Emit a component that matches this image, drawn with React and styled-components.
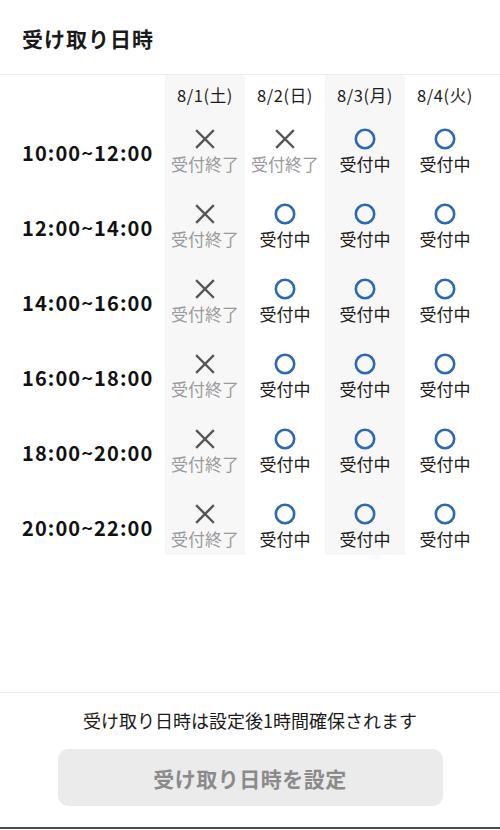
import React from "react";
import styled, { createGlobalStyle } from "styled-components";

const days = [
    { label: "8/1(土)", shaded: true, open: [false, false, false, false, false, false] },
    { label: "8/2(日)", shaded: false, open: [false, true, true, true, true, true] },
    { label: "8/3(月)", shaded: true, open: [true, true, true, true, true, true] },
    { label: "8/4(火)", shaded: false, open: [true, true, true, true, true, true] },
];

const times = ["10:00~12:00", "12:00~14:00", "14:00~16:00", "16:00~18:00", "18:00~20:00", "20:00~22:00"];

function CrossIcon() {
    return (
        <svg width="22" height="22" viewBox="0 0 22 22">
            <path d="M3 3 L19 19 M19 3 L3 19" stroke="#555" strokeWidth="2.4" strokeLinecap="square" fill="none" />
        </svg>
    );
}

function CircleIcon() {
    return (
        <svg width="22" height="22" viewBox="0 0 22 22">
            <circle cx="11" cy="11" r="9.2" stroke="#2d68b2" strokeWidth="2.6" fill="none" />
        </svg>
    );
}

function App() {
    return (
        <>
            <GlobalStyle />
            <Page>
                <Header>
                    <Title>受け取り日時</Title>
                </Header>
                <Table>
                    <LabelColumn>
                        <HeadCell />
                        {times.map((t) => (
                            <TimeCell key={t}>{t}</TimeCell>
                        ))}
                    </LabelColumn>
                    {days.map((day) => (
                        <DayColumn key={day.label} shaded={day.shaded}>
                            <HeadCell>{day.label}</HeadCell>
                            {day.open.map((open, i) => (
                                <SlotCell key={i}>
                                    {open ? <CircleIcon /> : <CrossIcon />}
                                    <SlotText closed={!open}>{open ? "受付中" : "受付終了"}</SlotText>
                                </SlotCell>
                            ))}
                        </DayColumn>
                    ))}
                </Table>
                <Footer>
                    <Note>受け取り日時は設定後1時間確保されます</Note>
                    <SubmitButton disabled>受け取り日時を設定</SubmitButton>
                </Footer>
            </Page>
        </>
    );
}

export default App;

const GlobalStyle = createGlobalStyle`
    body {
        margin: 0;
        background: #fff;
        font-family: "Noto Sans CJK JP", "Noto Sans", sans-serif;
        color: #1a1a1a;
    }
`;

const Page = styled.div`
    width: 500px;
    height: 830px;
    display: flex;
    flex-direction: column;
    box-sizing: border-box;
    padding-bottom: 1px;
`;

const Header = styled.div`
    height: 74px;
    display: flex;
    align-items: center;
    padding: 0 22px;
    border-bottom: 1px solid #ececec;
`;

const Title = styled.h1`
    margin: 0;
    font-size: 21px;
    font-weight: 700;
    letter-spacing: 1px;
    line-height: 1;
    padding-top: 3px;
`;

const Table = styled.div`
    display: flex;
`;

const Column = styled.div`
    display: flex;
    flex-direction: column;
    gap: 10px;
`;

const LabelColumn = styled(Column)`
    width: 165px;
`;

const DayColumn = styled(Column)`
    width: 80px;
    background: ${(p) => (p.shaded ? "#f7f7f7" : "transparent")};
`;

const HeadCell = styled.div`
    height: 40px;
    margin-bottom: -10px;
    padding-top: 8px;
    box-sizing: border-box;
    text-align: center;
    font-size: 16.5px;
    letter-spacing: 0.6px;
    line-height: 24px;
    white-space: nowrap;
    color: #1a1a1a;
`;

const TimeCell = styled.div`
    height: 65px;
    box-sizing: border-box;
    padding: 9px 0 0 22px;
    display: flex;
    align-items: center;
    font-size: 20px;
    font-weight: 700;
    letter-spacing: 1.1px;
    color: #111;
`;

const SlotCell = styled.div`
    height: 65px;
    box-sizing: border-box;
    padding-top: 13px;
    display: flex;
    flex-direction: column;
    align-items: center;
`;

const SlotText = styled.span`
    margin-top: 2px;
    font-size: 17px;
    line-height: 24px;
    white-space: nowrap;
    color: ${(p) => (p.closed ? "#9a9a9a" : "#1a1a1a")};
`;

const Footer = styled.div`
    margin-top: auto;
    border-top: 1px solid #ececec;
    border-bottom: 2px solid #4a4a4a;
    padding: 15px 0 21px;
    display: flex;
    flex-direction: column;
    align-items: center;
    gap: 17px;
`;

const Note = styled.p`
    margin: 0;
    font-size: 18px;
    line-height: 24px;
    color: #1a1a1a;
`;

const SubmitButton = styled.button`
    width: 385px;
    height: 57px;
    border: none;
    border-radius: 10px;
    background: #ebebeb;
    color: #8a8a8a;
    font-family: inherit;
    font-size: 21px;
    font-weight: 700;
    letter-spacing: 0.5px;
`;
